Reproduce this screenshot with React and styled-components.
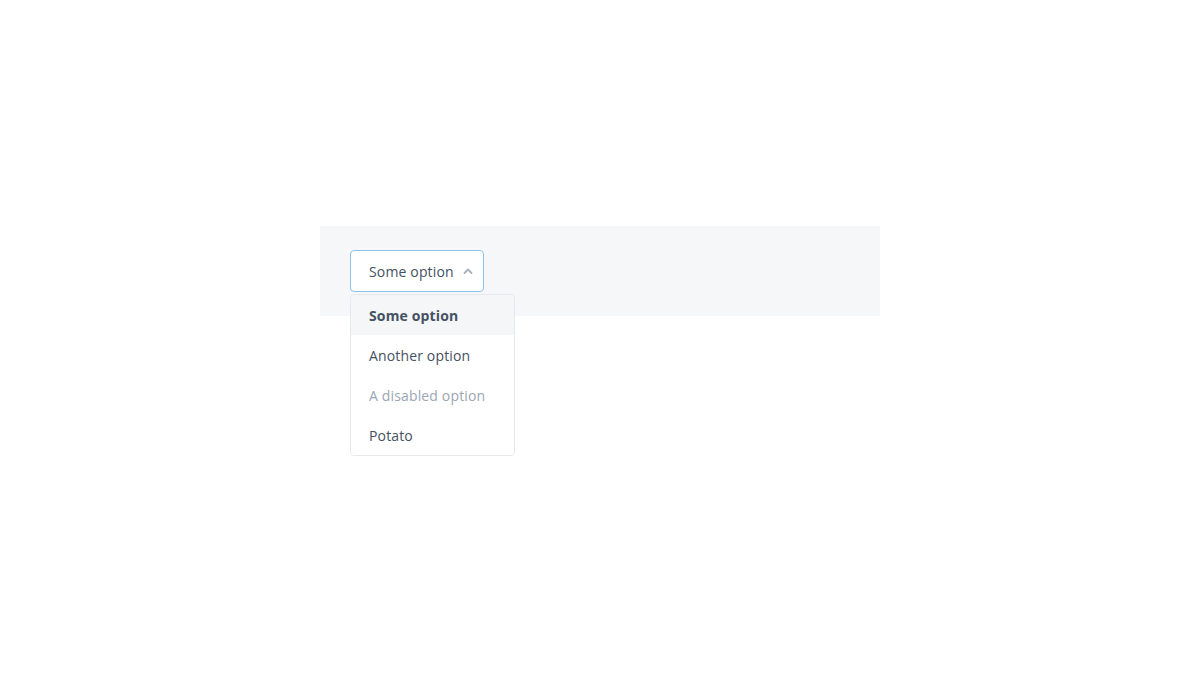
import React, { useState } from 'react';
import styled, { createGlobalStyle } from 'styled-components';

const GlobalStyle = createGlobalStyle`
  html, body {
    margin: 0;
    padding: 0;
    background: #ffffff;
    font-family: "Open Sans", "Liberation Sans", sans-serif;
  }
`;

const Page = styled.div`
  width: 1200px;
  height: 680px;
  padding-top: 226px;
  box-sizing: border-box;
  display: flex;
  justify-content: center;
  align-items: flex-start;
`;

const Panel = styled.div`
  width: 560px;
  background: #f5f7f9;
  padding: 24px 30px;
  box-sizing: border-box;
  display: flex;
`;

const SelectWrap = styled.div`
  position: relative;
`;

const Trigger = styled.button`
  height: 42px;
  width: 134px;
  padding: 0 9px 0 18px;
  box-sizing: border-box;
  display: flex;
  align-items: center;
  justify-content: space-between;
  background: #ffffff;
  border: 1px solid #8cc4e6;
  border-radius: 4px;
  font-family: inherit;
  font-size: 14px;
  letter-spacing: 0.15px;
  color: #445163;
  cursor: pointer;
`;

const Menu = styled.ul`
  position: absolute;
  top: 44px;
  left: 0;
  width: 165px;
  margin: 0;
  padding: 0;
  list-style: none;
  background: #ffffff;
  border: 1px solid #e6e9ec;
  border-radius: 4px;
  overflow: hidden;
  box-sizing: border-box;
`;

const Option = styled.li`
  height: 40px;
  padding: 0 18px;
  display: flex;
  align-items: center;
  font-size: 14px;
  letter-spacing: 0.15px;
  color: ${p => (p.$disabled ? '#9aa6b3' : '#445163')};
  font-weight: ${p => (p.$selected ? 700 : 400)};
  background: ${p => (p.$selected ? '#f5f6f8' : '#ffffff')};
  cursor: ${p => (p.$disabled ? 'default' : 'pointer')};
`;

const options = [
  { label: 'Some option' },
  { label: 'Another option' },
  { label: 'A disabled option', disabled: true },
  { label: 'Potato' },
];

function Chevron() {
  return (
    <svg width="12" height="12" viewBox="0 0 12 12" fill="none">
      <path d="M2.5 8 L6 4.5 L9.5 8" stroke="#a9b2bc" strokeWidth="1.8" strokeLinecap="round" strokeLinejoin="round" />
    </svg>
  );
}

export default function App() {
  const [value, setValue] = useState('Some option');

  return (
    <>
      <GlobalStyle />
      <Page>
        <Panel>
          <SelectWrap>
            <Trigger>
              {value}
              <Chevron />
            </Trigger>
            <Menu>
              {options.map(o => (
                <Option
                  key={o.label}
                  $disabled={o.disabled}
                  $selected={o.label === value}
                  onClick={() => !o.disabled && setValue(o.label)}
                >
                  {o.label}
                </Option>
              ))}
            </Menu>
          </SelectWrap>
        </Panel>
      </Page>
    </>
  );
}
